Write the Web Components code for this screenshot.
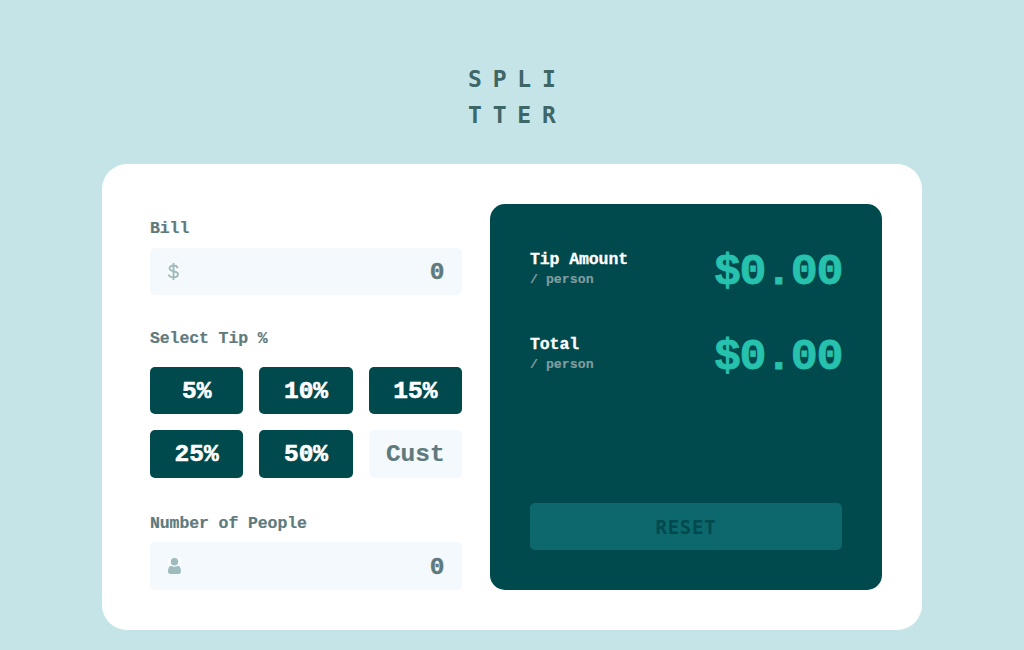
<!DOCTYPE html>
<html lang="en"><head><meta charset="utf-8"><title>Splitter</title>
<style>
html,body{margin:0;height:100%}
body{background:#c5e4e7;overflow:hidden;font-family:"Liberation Mono",monospace;font-weight:700;color:#5e7a7d}
</style></head><body>
<splitter-app></splitter-app>
<script>
const define=(name,html)=>customElements.define(name,class extends HTMLElement{
  constructor(){super();this.attachShadow({mode:'open'}).innerHTML=html;}
});
define('app-logo',`<style>
:host{display:block;width:100px;padding-top:61px;font-family:"DejaVu Sans Mono",monospace;font-size:23px;line-height:36px;letter-spacing:10.8px;color:#3d6666}
div{white-space:nowrap}</style><div>SPLI</div><div>TTER</div>`);
define('field-label',`<style>
:host{display:block;height:24px;font-size:16.5px;line-height:24px;letter-spacing:-.1px;white-space:nowrap;-webkit-text-stroke:.2px}</style><slot></slot>`);
define('number-field',`<style>
:host{display:flex;box-sizing:border-box;height:47px;align-items:center;justify-content:space-between;padding:0 17.5px;border-radius:5px;background:#f3f9fc;font-size:24.5px;line-height:47px;-webkit-text-stroke:.4px}
span{padding-top:2px}
::slotted(svg){display:block;background:#fbfdfe}</style><slot name="icon"></slot><span><slot></slot></span>`);
define('tip-option',`<style>
:host{display:block;text-align:center;border-radius:5px;background:#00494d;color:#fff;font-size:24.5px;line-height:49px;-webkit-text-stroke:.6px;overflow:hidden}
:host([custom]){background:#f3f9fc;color:#5e7a7d;-webkit-text-stroke:.2px}</style><slot></slot>`);
define('amount-row',`<style>
:host{display:flex;justify-content:space-between;height:85px}
.name{font-size:16.5px;letter-spacing:-.1px;line-height:20px;color:#fff;-webkit-text-stroke:.3px}
.per{font-size:13.2px;letter-spacing:.04px;line-height:19px;color:#7f9c9f;-webkit-text-stroke:.2px}
.value{font-size:45px;letter-spacing:-1.4px;line-height:52px;margin:-3px 0 0 0;color:#26c2ae;-webkit-text-stroke:.8px}
</style><div><div class="name"><slot></slot></div><div class="per">/ person</div></div><div class="value"><slot name="value"></slot></div>`);
define('reset-button',`<style>
:host{display:block;height:47px;border-radius:5px;background:#0d686d;color:#00494d;text-align:center;font-family:"DejaVu Sans Mono",monospace;font-size:19px;line-height:48px;letter-spacing:.8px}</style><slot></slot>`);
define('result-panel',`<style>
:host{display:flex;flex-direction:column;box-sizing:border-box;height:386px;padding:46px 40px 40px;border-radius:15px;background:#00494d}
reset-button{margin-top:auto}</style>
<amount-row>Tip Amount<span slot="value">$0.00</span></amount-row>
<amount-row>Total<span slot="value">$0.00</span></amount-row>
<reset-button>RESET</reset-button>`);
define('tip-form',`<style>
:host{display:flex;flex-direction:column;padding-top:13px}
.bill{margin-top:7px}
.tip{margin-top:32px}
.grid{display:grid;grid-template-columns:repeat(3,1fr);grid-template-rows:47px 48px;gap:16px;margin-top:16px}
.people{margin-top:34px}
.count{margin-top:6px;height:48px}
</style>
<field-label>Bill</field-label>
<number-field class="bill"><svg slot="icon" width="11" height="17" viewBox="0 0 11 17"><path d="M5.5 0v17M9.7 5.2C9.3 3.3 7.8 2.5 5.500 2.500S1.500 3.500 1.500 5.300c0 4.200 8.500 1.800 8.500 6 0 2-1.700 3.100-4.400 3.100S1.100 13.300.800 11.300" fill="none" stroke="#9ebbbd" stroke-width="1.9"/></svg>0</number-field>
<field-label class="tip">Select Tip %</field-label>
<div class="grid"><tip-option>5%</tip-option><tip-option>10%</tip-option><tip-option>15%</tip-option><tip-option>25%</tip-option><tip-option>50%</tip-option><tip-option custom>Cust</tip-option></div>
<field-label class="people">Number of People</field-label>
<number-field class="count"><svg slot="icon" width="13" height="16" viewBox="0 0 13 16"><circle cx="6.500" cy="3.700" r="3.700" fill="#9ebbbd"/><path d="M2.800 7.700Q6.500 9.800 10.200 7.700Q13 9 13 13.300Q13 16 10.500 16H2.500Q0 16 0 13.300Q0 9 2.800 7.700Z" fill="#9ebbbd"/></svg>0</number-field>`);
define('splitter-app',`<style>
:host{display:flex;flex-direction:column;align-items:center}
app-logo{height:103px;margin-left:12px}
main{display:grid;grid-template-columns:312px 392px;column-gap:28px;box-sizing:border-box;width:820px;height:466px;padding:40px 40px 40px 48px;border-radius:25px;background:#fff}
</style><app-logo></app-logo><main><tip-form></tip-form><result-panel></result-panel></main>`);
</script></body></html>
